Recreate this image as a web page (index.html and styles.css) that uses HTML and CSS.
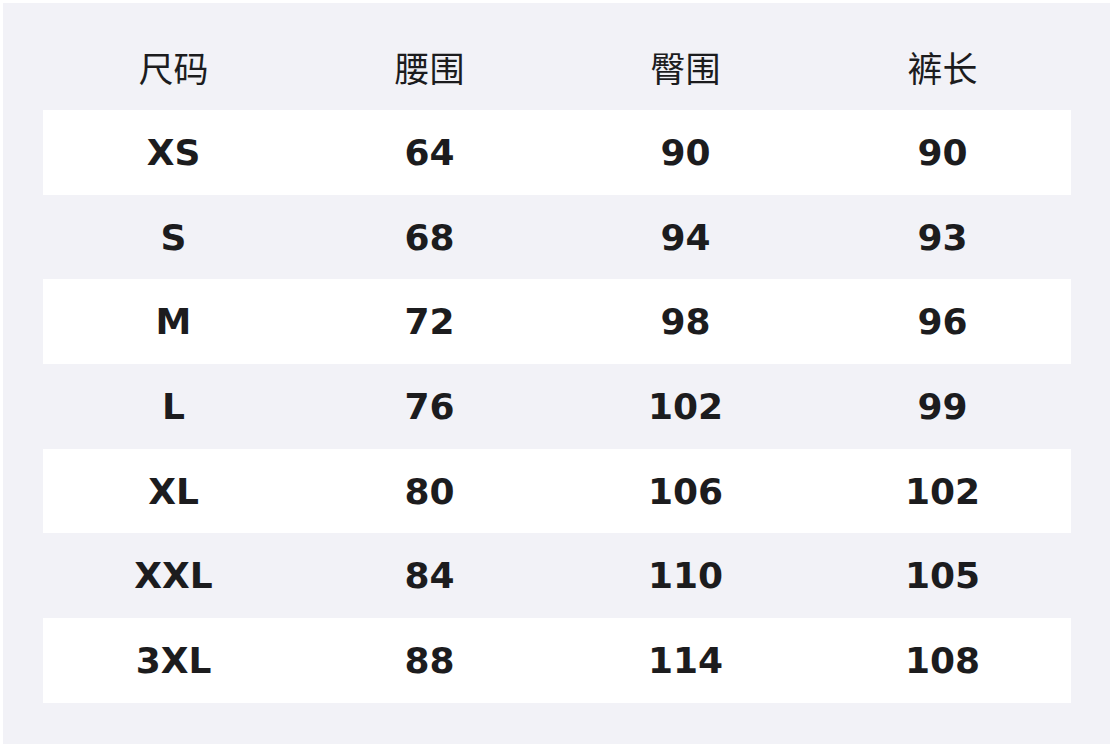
FILE: index.html
```html
<!DOCTYPE html>
<html lang="zh">
<head>
<meta charset="utf-8">
<link rel="stylesheet" href="styles.css">
</head>
<body>
<div class="panel">
  <div class="row head">
    <div class="cell">尺码</div><div class="cell">腰围</div><div class="cell">臀围</div><div class="cell">裤长</div>
  </div>
  <div class="row odd"><div class="cell">XS</div><div class="cell">64</div><div class="cell">90</div><div class="cell">90</div></div>
  <div class="row"><div class="cell">S</div><div class="cell">68</div><div class="cell">94</div><div class="cell">93</div></div>
  <div class="row odd"><div class="cell">M</div><div class="cell">72</div><div class="cell">98</div><div class="cell">96</div></div>
  <div class="row"><div class="cell">L</div><div class="cell">76</div><div class="cell">102</div><div class="cell">99</div></div>
  <div class="row odd"><div class="cell">XL</div><div class="cell">80</div><div class="cell">106</div><div class="cell">102</div></div>
  <div class="row"><div class="cell">XXL</div><div class="cell">84</div><div class="cell">110</div><div class="cell">105</div></div>
  <div class="row odd"><div class="cell">3XL</div><div class="cell">88</div><div class="cell">114</div><div class="cell">108</div></div>
</div>
</body>
</html>
```
FILE: styles.css
```css
html, body { margin: 0; padding: 0; background: #ffffff; }
body { padding: 3px 4px 4px 3px; }
.panel {
  background: #f2f2f7;
  height: 741px;
  box-sizing: border-box;
  padding: 0 39px 0 40px;
  color: #1c1c1e;
}
.row {
  display: grid;
  grid-template-columns: repeat(4, 1fr);
  height: 84.7px;
  align-items: center;
  font-family: "DejaVu Sans", sans-serif;
  font-weight: bold;
  font-size: 36px;
}
.row.odd { background: #ffffff; }
.row.head {
  height: 107px;
  font-family: "Noto Sans CJK SC", sans-serif;
  font-weight: normal;
  font-size: 35px;
  padding-top: 20px;
  box-sizing: border-box;
}
.cell { text-align: center; }
.cell:first-child { padding-left: 4px; }
.cell:nth-child(2) { padding-left: 2px; }
```
